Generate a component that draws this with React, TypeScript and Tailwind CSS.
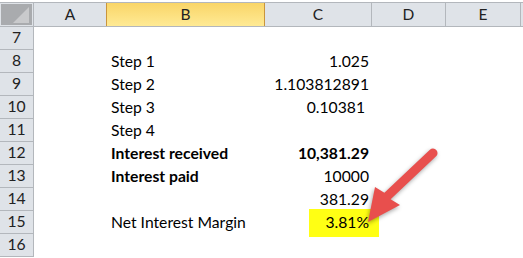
import React from "react";

type Row = {
  n: number;
  b?: string;
  c?: string;
  boldB?: boolean;
  boldC?: boolean;
  padC?: boolean;
};

const rows: Row[] = [
  { n: 7 },
  { n: 8, b: "Step 1", c: "1.025" },
  { n: 9, b: "Step 2", c: "1.103812891" },
  { n: 10, b: "Step 3", c: "0.10381", padC: true },
  { n: 11, b: "Step 4" },
  { n: 12, b: "Interest received", c: "10,381.29", boldB: true, boldC: true },
  { n: 13, b: "Interest paid", c: "10000", boldB: true },
  { n: 14, c: "381.29" },
  { n: 15, b: "Net Interest Margin", c: "3.81%" },
  { n: 16 },
];

const font = { fontFamily: "Lato, 'Open Sans', sans-serif" };

function Header() {
  return (
    <div className="flex h-[25px] border-y border-[#b3b7bc] bg-[#dfe3e8] text-[15.5px] text-[#222]">
      <div className="flex w-[34px] shrink-0 items-stretch border-r border-[#b3b7bc] p-[1px]">
        <div className="relative flex-1 bg-[#a9abae]">
          <svg className="absolute inset-0" width="31" height="21" viewBox="0 0 31 21">
            <polygon points="28,3 28,19 12,19" fill="#c9cacc" />
          </svg>
        </div>
      </div>
      <div className="flex w-[73px] shrink-0 items-center justify-center border-r border-[#b3b7bc]">A</div>
      <div className="-ml-[1px] flex w-[159px] shrink-0 items-center justify-center border-x border-[#c9953c] bg-gradient-to-b from-[#f9d567] to-[#ffea94]">
        B
      </div>
      <div className="flex w-[107px] shrink-0 items-center justify-center border-r border-[#b3b7bc]">C</div>
      <div className="flex w-[74px] shrink-0 items-center justify-center border-r border-[#b3b7bc]">D</div>
      <div className="flex w-[75px] shrink-0 items-center justify-center border-r border-[#b3b7bc]">E</div>
    </div>
  );
}

function SheetRow({ r }: { r: Row }) {
  return (
    <div className="flex h-[23px] text-[15.7px] text-black">
      <div className="flex w-[34px] shrink-0 items-center justify-center border-b border-r border-[#b3b7bc] bg-[#dfe3e8] text-[#222]">
        {r.n}
      </div>
      <div className="w-[73px] shrink-0" />
      <div className={`flex w-[159px] shrink-0 items-center pl-[4px] ${r.boldB ? "font-bold" : ""}`}>
        {r.b}
      </div>
      <div
        className={`flex w-[107px] shrink-0 items-center justify-end ${r.padC ? "pr-[8px]" : "pr-[4px]"} ${r.boldC ? "font-bold" : ""}`}
      >
        {r.c}
      </div>
      <div className="w-[74px] shrink-0" />
      <div className="w-[75px] shrink-0" />
    </div>
  );
}

function Arrow() {
  return (
    <svg
      className="pointer-events-none absolute left-0 top-0"
      width="523"
      height="258"
      viewBox="0 0 523 258"
      style={{ filter: "drop-shadow(-1px 2px 2px rgba(0,0,0,0.35))" }}
    >
      <path
        d="M429.9 149.7 L384.4 192.7 L375 187 L368 222 L400 205 L390.6 199.3 L436.1 156.3 A4.5 4.5 0 0 0 429.9 149.7 Z"
        fill="#e84f4d"
      />
    </svg>
  );
}

export default function App() {
  return (
    <div className="relative h-[258px] w-[523px] overflow-hidden bg-white pt-[2px]" style={font}>
      <div className="absolute left-[309px] top-[209px] h-[28px] w-[70px] bg-[#ffff14]" />
      <div className="relative">
        <Header />
        {rows.map((r) => (
          <SheetRow key={r.n} r={r} />
        ))}
      </div>
      <Arrow />
    </div>
  );
}
